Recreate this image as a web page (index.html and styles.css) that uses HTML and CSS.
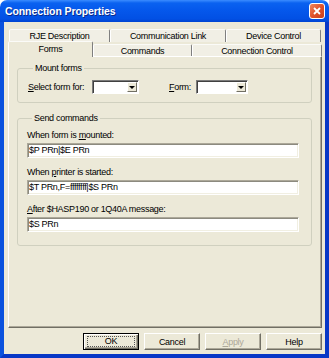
FILE: index.html
```html
<!DOCTYPE html>
<html lang="en">
<head>
    <meta charset="UTF-8">
    <title>Connection Properties</title>
    <link rel="stylesheet" href="styles.css">
</head>
<body>
    <div class="window">
        <div class="titlebar">
            <span class="title">Connection Properties</span>
            <span class="close">
                <svg width="8" height="8" viewBox="0 0 8 8"><path d="M1 1L7 7M7 1L1 7" stroke="#fff" stroke-width="1.8" fill="none"/></svg>
            </span>
        </div>
        <div class="frame">
            <div class="client">
                <div class="tabs">
                    <div class="tab-row back">
                        <div class="tab t-rje">RJE Description</div>
                        <div class="tab t-link">Communication Link</div>
                        <div class="tab t-device">Device Control</div>
                    </div>
                    <div class="tab-row front">
                        <div class="tab t-forms selected">Forms</div>
                        <div class="tab t-commands">Commands</div>
                        <div class="tab t-control">Connection Control</div>
                    </div>
                </div>

                <div class="panel">
                    <fieldset class="group mount">
                        <legend>Mount forms</legend>
                        <div class="form-row">
                            <label class="lbl-select"><u>S</u>elect form for:</label>
                            <span class="combo combo-select"><span class="combo-btn"></span></span>
                            <label class="lbl-form"><u>F</u>orm:</label>
                            <span class="combo combo-form"><span class="combo-btn"></span></span>
                        </div>
                    </fieldset>

                    <fieldset class="group send">
                        <legend>Send commands</legend>
                        <div class="field">
                            <label>When form is <u>m</u>ounted:</label>
                            <div class="edit">$P PRn|$E PRn</div>
                        </div>
                        <div class="field">
                            <label>When <u>p</u>rinter is started:</label>
                            <div class="edit">$T PRn,F=ffffffff|$S PRn</div>
                        </div>
                        <div class="field">
                            <label><u>A</u>fter $HASP190 or 1Q40A message:</label>
                            <div class="edit">$S PRn</div>
                        </div>
                    </fieldset>
                </div>

                <div class="buttons">
                    <button class="btn default"><span>OK</span></button>
                    <button class="btn">Cancel</button>
                    <button class="btn disabled"><u>A</u>pply</button>
                    <button class="btn">Help</button>
                </div>
            </div>
        </div>
    </div>
</body>
</html>
```

FILE: styles.css
```css
body {
    margin: 0;
    background: #fff;
    font-family: "Liberation Sans", Arial, sans-serif;
    font-size: 9px;
    letter-spacing: -0.3px;
    color: #000;
}
.window {
    width: 329px;
    height: 358px;
    display: flex;
    flex-direction: column;
    border-radius: 7px 7px 0 0;
    overflow: hidden;
}
.titlebar {
    height: 22px;
    flex: none;
    display: flex;
    align-items: center;
    justify-content: space-between;
    padding: 0 4px 0 5px;
    background: linear-gradient(#3b8cff 0, #0a62f0 3px, #0558ec 45%, #0250e4 85%, #0145d2 100%);
}
.title {
    color: #fff;
    font-weight: bold;
    font-size: 10.5px;
    letter-spacing: -0.1px;
    text-shadow: 1px 1px #0a2a8a;
}
.close {
    width: 16px;
    height: 16px;
    box-sizing: border-box;
    border: 1px solid #fff;
    border-radius: 3px;
    background: linear-gradient(135deg, #f0875f, #e0532c 50%, #c8401c);
    display: flex;
    align-items: center;
    justify-content: center;
}
.frame {
    flex: 1;
    display: flex;
    border-left: 4px solid #0b52de;
    border-right: 5px solid #0737c6;
    border-bottom: 4px solid #0737c6;
}
.client {
    flex: 1;
    display: flex;
    flex-direction: column;
    background: #ece9d8;
    padding: 7px 3px 0 4px;
}

/* tabs */
.tab-row {
    display: flex;
}
.tab-row.back {
    height: 13px;
    padding-left: 1px;
}
.tab-row.front {
    height: 15px;
    align-items: flex-end;
    margin-bottom: -1px;
}
.tab {
    box-sizing: border-box;
    height: 13px;
    line-height: 12px;
    text-align: center;
    background: #f1efe5;
    border-top: 1px solid #fbfbf8;
    border-left: 1px solid #fff;
    border-right: 1px solid #7f7f7f;
    border-radius: 2px 2px 0 0;
    white-space: nowrap;
}
.tab.selected {
    position: relative;
    z-index: 1;
    height: 16px;
    line-height: 14px;
    background: #ece9d8;
}
.t-rje { width: 101px; }
.t-link { width: 116px; }
.t-device { width: 95px; }
.t-forms { width: 85px; }
.t-commands { width: 99px; }
.t-control { width: 130px; }

.panel {
    height: 272px;
    box-sizing: border-box;
    flex: none;
    border-top: 1px solid #fff;
    border-left: 1px solid #fff;
    border-right: 1px solid #716f64;
    border-bottom: 1px solid #716f64;
    box-shadow: inset -1px -1px #aca899;
    padding: 6px 0 0 8px;
}

/* group boxes */
.group {
    width: 295px;
    box-sizing: border-box;
    margin: 0;
    border: 1px solid #d0d0bf;
    border-radius: 3px;
}
.group legend {
    line-height: 11px;
    padding: 0 2px;
    margin-left: 5px;
}
.mount {
    padding: 6px 0 8px 10px;
}
.send {
    margin-top: 10px;
    padding: 5px 0 13px 9px;
}
.form-row {
    display: flex;
    align-items: center;
    height: 14px;
}
.lbl-select { width: 64px; white-space: nowrap; }
.lbl-form { width: 27px; margin-left: 30px; }

.combo {
    height: 14px;
    box-sizing: border-box;
    background: #fff;
    border: 1px solid;
    border-color: #7a7a7a #fff #fff #7a7a7a;
    box-shadow: inset 1px 1px #404040;
    display: flex;
    justify-content: flex-end;
    align-items: center;
    padding-right: 1px;
}
.combo-select { width: 47px; }
.combo-form { width: 52px; }
.combo-btn {
    width: 10px;
    height: 10px;
    box-sizing: border-box;
    background: #ece9d8;
    border: 1px solid;
    border-color: #fff #716f64 #716f64 #fff;
    display: flex;
    align-items: center;
    justify-content: center;
}
.combo-btn::after {
    content: "";
    border-left: 3px solid transparent;
    border-right: 3px solid transparent;
    border-top: 3px solid #000;
}

.field {
    display: flex;
    flex-direction: column;
    margin-bottom: 8px;
}
.field:last-child {
    margin-bottom: 0;
}
.field label {
    line-height: 12px;
    margin-bottom: 2px;
}
.edit {
    width: 272px;
    height: 15px;
    box-sizing: border-box;
    background: #fff;
    border: 1px solid;
    border-color: #aca899 #fff #fff #aca899;
    box-shadow: inset 1px 1px #8c8a7f, inset -1px -1px #f1efe2;
    padding-left: 1px;
    line-height: 13px;
    white-space: nowrap;
}

/* buttons */
.buttons {
    display: flex;
    justify-content: flex-end;
    gap: 5px;
    margin-top: 5px;
}
.btn {
    width: 56px;
    height: 17px;
    padding: 0;
    font: inherit;
    letter-spacing: inherit;
    color: #000;
    background: #ece9d8;
    border: 1px solid;
    border-color: #fff #716f64 #716f64 #fff;
    box-shadow: inset -1px -1px #aca899;
}
.btn.default {
    border: 1px solid #000;
    box-shadow: inset 1px 1px #fff, inset -1px -1px #716f64, inset -2px -2px #aca899;
    padding: 2px 3px;
}
.btn.default span {
    display: block;
    height: 100%;
    box-sizing: border-box;
    border: 1px dotted #555;
    line-height: 9px;
}
.btn.disabled {
    color: #aca899;
}
```
